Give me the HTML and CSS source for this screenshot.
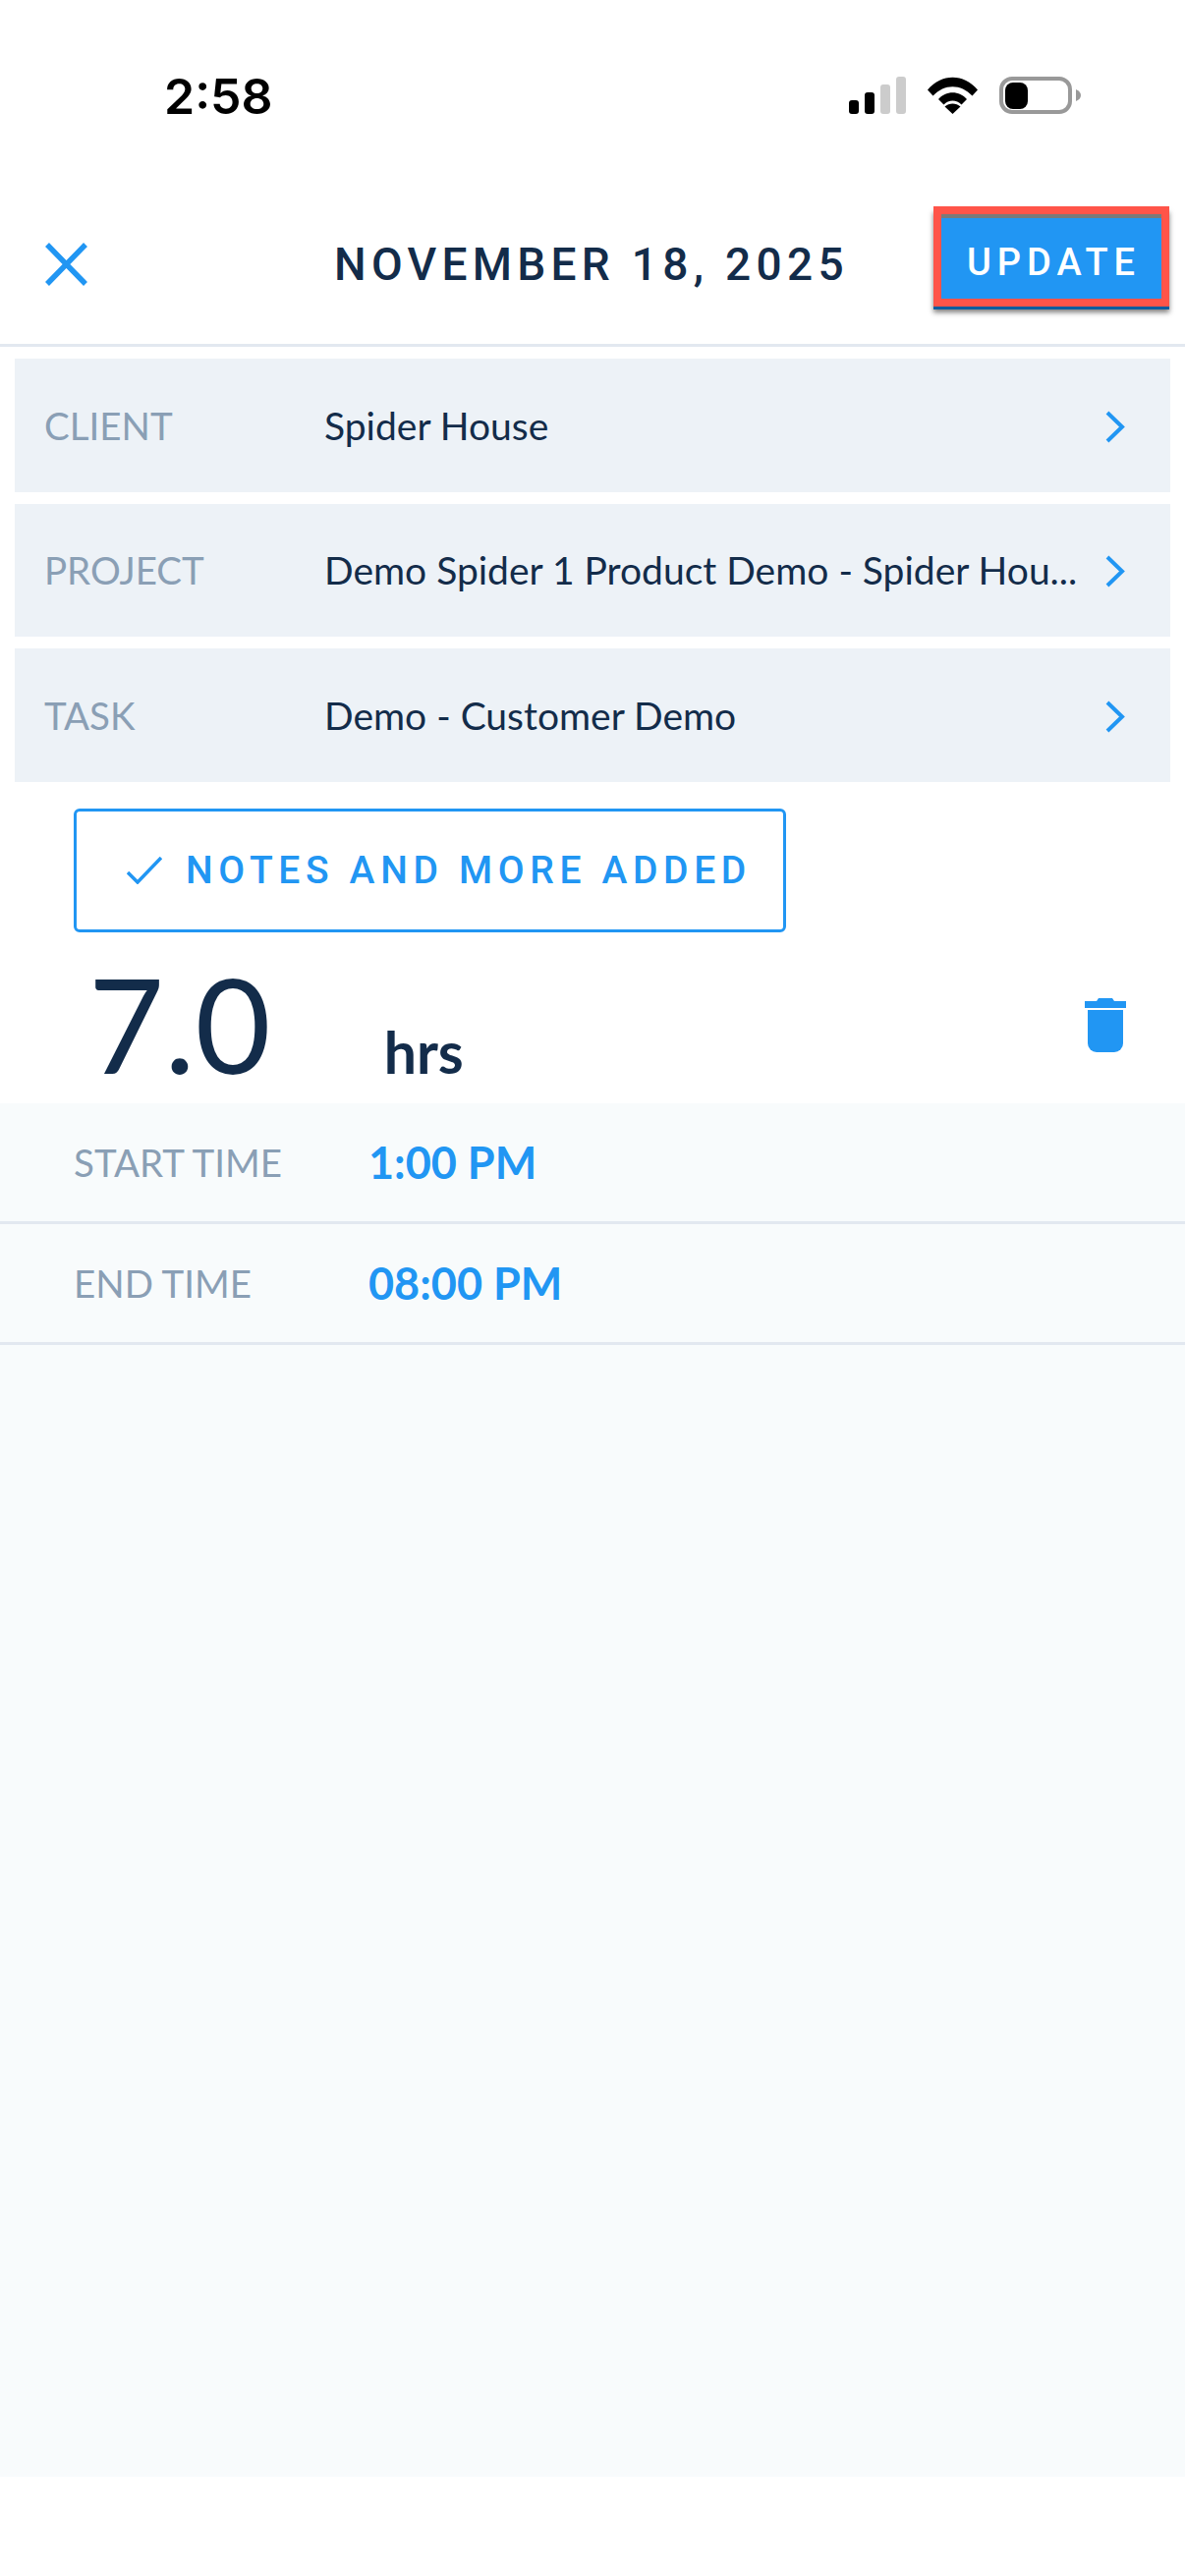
FILE: index.html
```html
<!DOCTYPE html>
<html lang="en">
<head>
    <meta charset="UTF-8">
    <meta name="viewport" content="width=device-width, initial-scale=1.0">
    <title>Edit Time Entry</title>
    <link rel="stylesheet" href="styles.css">
</head>
<body>
    <div class="status-bar">
        <span class="clock">2:58</span>
        <div class="status-icons">
            <svg class="signal" width="58" height="38" viewBox="0 0 58 38">
                <rect x="0" y="24" width="10" height="14" rx="3" fill="#000"/>
                <rect x="16" y="16" width="10" height="22" rx="3" fill="#000"/>
                <rect x="32" y="8" width="10" height="30" rx="3" fill="#ccc"/>
                <rect x="48" y="0" width="10" height="38" rx="3" fill="#ccc"/>
            </svg>
            <svg class="wifi" width="51" height="38" viewBox="0 0 51 38">
                <path d="M0 13.5C14-3.5 37-3.500 51 13.500L45.500 19.500C34 7 17 7 5.500 19.500Z" fill="#000"/>
                <path d="M11 23C18.500 14 32.500 14 40 23L34.500 28.500C29.500 23 21.500 23 16.500 28.500Z" fill="#000"/>
                <path d="M25.500 38L17.500 30.500C22 26.500 29 26.500 33.500 30.500Z" fill="#000"/>
            </svg>
            <svg class="battery" width="83" height="38" viewBox="0 0 83 38">
                <rect x="2" y="2" width="70" height="34" rx="11" fill="#fff" stroke="#999" stroke-width="4"/>
                <rect x="6" y="6" width="23" height="27" rx="8" fill="#000"/>
                <path d="M78 13C81.500 14.500 83 16.500 83 19C83 21.500 81.500 23.500 78 25Z" fill="#999"/>
            </svg>
        </div>
    </div>

    <header class="top-bar">
        <svg class="close-icon" width="43" height="44" viewBox="0 0 43 44">
            <path d="M2 2L41 42M41 2L2 42" fill="none" stroke="#2196f3" stroke-width="5.500"/>
        </svg>
        <h1>NOVEMBER 18, 2025</h1>
        <button class="update-btn">UPDATE</button>
    </header>

    <section class="picker-list">
        <div class="picker-row">
            <span class="picker-label">CLIENT</span>
            <span class="picker-value">Spider House</span>
            <svg class="chevron" width="21" height="33" viewBox="0 0 21 33"><path d="M3 2L18 16.500L3 31" fill="none" stroke="#2196f3" stroke-width="4"/></svg>
        </div>
        <div class="picker-row">
            <span class="picker-label">PROJECT</span>
            <span class="picker-value">Demo Spider 1 Product Demo - Spider Hou...</span>
            <svg class="chevron" width="21" height="33" viewBox="0 0 21 33"><path d="M3 2L18 16.500L3 31" fill="none" stroke="#2196f3" stroke-width="4"/></svg>
        </div>
        <div class="picker-row">
            <span class="picker-label">TASK</span>
            <span class="picker-value">Demo - Customer Demo</span>
            <svg class="chevron" width="21" height="33" viewBox="0 0 21 33"><path d="M3 2L18 16.500L3 31" fill="none" stroke="#2196f3" stroke-width="4"/></svg>
        </div>
    </section>

    <button class="notes-btn">
        <svg width="36" height="28" viewBox="0 0 36 28"><path d="M1 16L11 26L35 1" fill="none" stroke="#2196f3" stroke-width="3.500"/></svg>
        <span>NOTES AND MORE ADDED</span>
    </button>

    <section class="hours">
        <span class="hours-num">7.0</span>
        <span class="hours-unit">hrs</span>
        <svg class="trash" width="42" height="55" viewBox="0 0 42 55">
            <path d="M0 3H12L14 0H28L30 3H42V10H0Z" fill="#2196f3"/>
            <path d="M3 12H39V46A9 9 0 0 1 30 55H12A9 9 0 0 1 3 46Z" fill="#2196f3"/>
        </svg>
    </section>

    <section class="times">
        <div class="time-row">
            <span class="time-label">START TIME</span>
            <span class="time-value">1:00 PM</span>
        </div>
        <div class="time-row">
            <span class="time-label">END TIME</span>
            <span class="time-value">08:00 PM</span>
        </div>
    </section>
</body>
</html>
```

FILE: styles.css
```css
/* Reset and base styles */
* {
    margin: 0;
    padding: 0;
    box-sizing: border-box;
}

body {
    width: 1206px;
    height: 2622px;
    background-color: #fff;
    font-family: Lato, sans-serif;
    color: #132c4a;
    overflow: hidden;
}

.status-bar {
    height: 180px;
    display: flex;
    align-items: flex-start;
    justify-content: space-between;
    padding: 70px 106px 0 167px;
}

.clock {
    font-family: Inter, sans-serif;
    font-weight: 600;
    font-size: 50px;
    line-height: 56px;
    color: #000;
}

.status-icons {
    display: flex;
    align-items: flex-start;
    gap: 22px;
    padding-top: 8px;
}

.top-bar {
    height: 173px;
    display: flex;
    align-items: center;
    padding: 10px 16px 3px 46px;
    border-bottom: 3px solid #e2e8f0;
}

.top-bar h1 {
    font-family: Roboto, sans-serif;
    font-weight: 500;
    font-size: 46px;
    letter-spacing: 5.300px;
    margin-left: 251px;
    white-space: nowrap;
}

.update-btn {
    align-self: flex-start;
    margin: 20px 0 0 auto;
    width: 240px;
    height: 102px;
    padding: 12px 0 0 5px;
    border: 8px solid #ff5449;
    background-color: #2196f3;
    color: #fff;
    font-family: Roboto, sans-serif;
    font-weight: 500;
    font-size: 38px;
    letter-spacing: 6px;
    box-shadow: 0 3px 0 #0f5c9e, 0 6px 5px rgba(0, 0, 0, 0.5), inset 0 4px 0 #7a7a7a;
}

.picker-list {
    display: grid;
    gap: 12px;
    padding: 12px 15px 0;
}

.picker-row {
    height: 135.500px;
    display: flex;
    align-items: center;
    padding: 0 46px 0 30px;
    background-color: #edf2f7;
}

.picker-label {
    width: 285px;
    flex-shrink: 0;
    font-size: 38.500px;
    color: #8a9fb5;
}

.picker-value {
    flex: 1;
    font-size: 39px;
    white-space: nowrap;
}

.chevron {
    margin-top: 3px;
}

.notes-btn {
    display: flex;
    align-items: center;
    gap: 24px;
    width: 725px;
    height: 126px;
    margin: 27px 0 0 75px;
    padding-left: 51px;
    background-color: #fff;
    border: 3px solid #2196f3;
    border-radius: 6px;
    color: #2196f3;
    font-family: Roboto, sans-serif;
    font-weight: 500;
    font-size: 39px;
    letter-spacing: 5.650px;
}

.hours {
    height: 174px;
    display: flex;
    align-items: baseline;
    padding: 0 0 0 90px;
}

.hours-num {
    font-size: 133px;
    line-height: 160px;
    margin-top: 13px;
}

.hours-unit {
    font-size: 59px;
    font-weight: 700;
    margin-left: 115px;
}

.trash {
    align-self: flex-start;
    margin: 67px 60px 0 auto;
}

.times {
    height: 1398px;
    background-color: #f8fbfc;
}

.time-row {
    height: 123px;
    display: flex;
    align-items: center;
    padding-left: 75px;
    border-bottom: 3px solid #e2e8f0;
}

.time-label {
    width: 300px;
    font-size: 38.500px;
    color: #8a9fb5;
}

.time-value {
    font-size: 45px;
    font-weight: 700;
    color: #2196f3;
}
```
